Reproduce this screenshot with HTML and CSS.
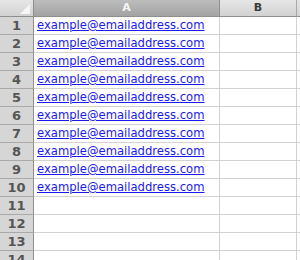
FILE: index.html
```html
<!DOCTYPE html>
<html lang="en">

<head>
  <meta charset="utf-8">
  <title>Sheet</title>
  <link rel="stylesheet" href="styles.css">
</head>

<body>
  <div class="sheet">
    <!-- column headers -->
    <div class="corner"></div>
    <div class="colhead selected">A</div>
    <div class="colhead">B</div>
    <div class="colhead"></div>

    <div class="rowhead">1</div><div class="cell"><a href="#">example@emailaddress.com</a></div><div class="cell"></div><div class="cell"></div>
    <div class="rowhead">2</div><div class="cell"><a href="#">example@emailaddress.com</a></div><div class="cell"></div><div class="cell"></div>
    <div class="rowhead">3</div><div class="cell"><a href="#">example@emailaddress.com</a></div><div class="cell"></div><div class="cell"></div>
    <div class="rowhead">4</div><div class="cell"><a href="#">example@emailaddress.com</a></div><div class="cell"></div><div class="cell"></div>
    <div class="rowhead">5</div><div class="cell"><a href="#">example@emailaddress.com</a></div><div class="cell"></div><div class="cell"></div>
    <div class="rowhead">6</div><div class="cell"><a href="#">example@emailaddress.com</a></div><div class="cell"></div><div class="cell"></div>
    <div class="rowhead">7</div><div class="cell"><a href="#">example@emailaddress.com</a></div><div class="cell"></div><div class="cell"></div>
    <div class="rowhead">8</div><div class="cell"><a href="#">example@emailaddress.com</a></div><div class="cell"></div><div class="cell"></div>
    <div class="rowhead">9</div><div class="cell"><a href="#">example@emailaddress.com</a></div><div class="cell"></div><div class="cell"></div>
    <div class="rowhead">10</div><div class="cell"><a href="#">example@emailaddress.com</a></div><div class="cell"></div><div class="cell"></div>
    <div class="rowhead">11</div><div class="cell"></div><div class="cell"></div><div class="cell"></div>
    <div class="rowhead">12</div><div class="cell"></div><div class="cell"></div><div class="cell"></div>
    <div class="rowhead">13</div><div class="cell"></div><div class="cell"></div><div class="cell"></div>
    <div class="rowhead">14</div><div class="cell"></div><div class="cell"></div><div class="cell"></div>
  </div>
</body>

</html>
```

FILE: styles.css
```css
/* Spreadsheet grid */
body {
  margin: 0;
  background-color: white;
  font-family: "DejaVu Sans", Verdana, sans-serif;
  overflow: hidden;
}

.sheet {
  display: grid;
  grid-template-columns: 34px 186px 77px 20px;
  grid-template-rows: 17px repeat(14, 18px);
}

.corner,
.colhead {
  border-right: 1px solid #a9a9a9;
  border-bottom: 1px solid #8f8f8f;
  background: linear-gradient(#e6e6e6, #d2d2d2);
  color: #3a3a3a;
  font-size: 11px;
  font-weight: bold;
  text-align: center;
  line-height: 16px;
}

.corner {
  position: relative;
  border-right-color: #8f8f8f;
}

.corner:after {
  position: absolute;
  content: "";
  right: 3px;
  bottom: 2px;
  border-left: 10px solid transparent;
  border-bottom: 10px solid #f6f6f6;
}

.colhead.selected {
  background: linear-gradient(#bdbdbd, #a3a3a3);
  color: #f4f4f4;
  border-right-color: #8f8f8f;
}

.rowhead {
  border-right: 1px solid #8f8f8f;
  border-bottom: 1px solid #a9a9a9;
  background-color: #d6d6d6;
  color: #555;
  font-size: 13px;
  font-weight: bold;
  text-align: center;
  line-height: 17px;
}

.cell {
  border-right: 1px solid #d2d2d2;
  border-bottom: 1px solid #d2d2d2;
  font-size: 11.6px;
  line-height: 17px;
  padding-left: 3px;
  white-space: nowrap;
}

.cell a {
  color: #1a1aee;
}
```
